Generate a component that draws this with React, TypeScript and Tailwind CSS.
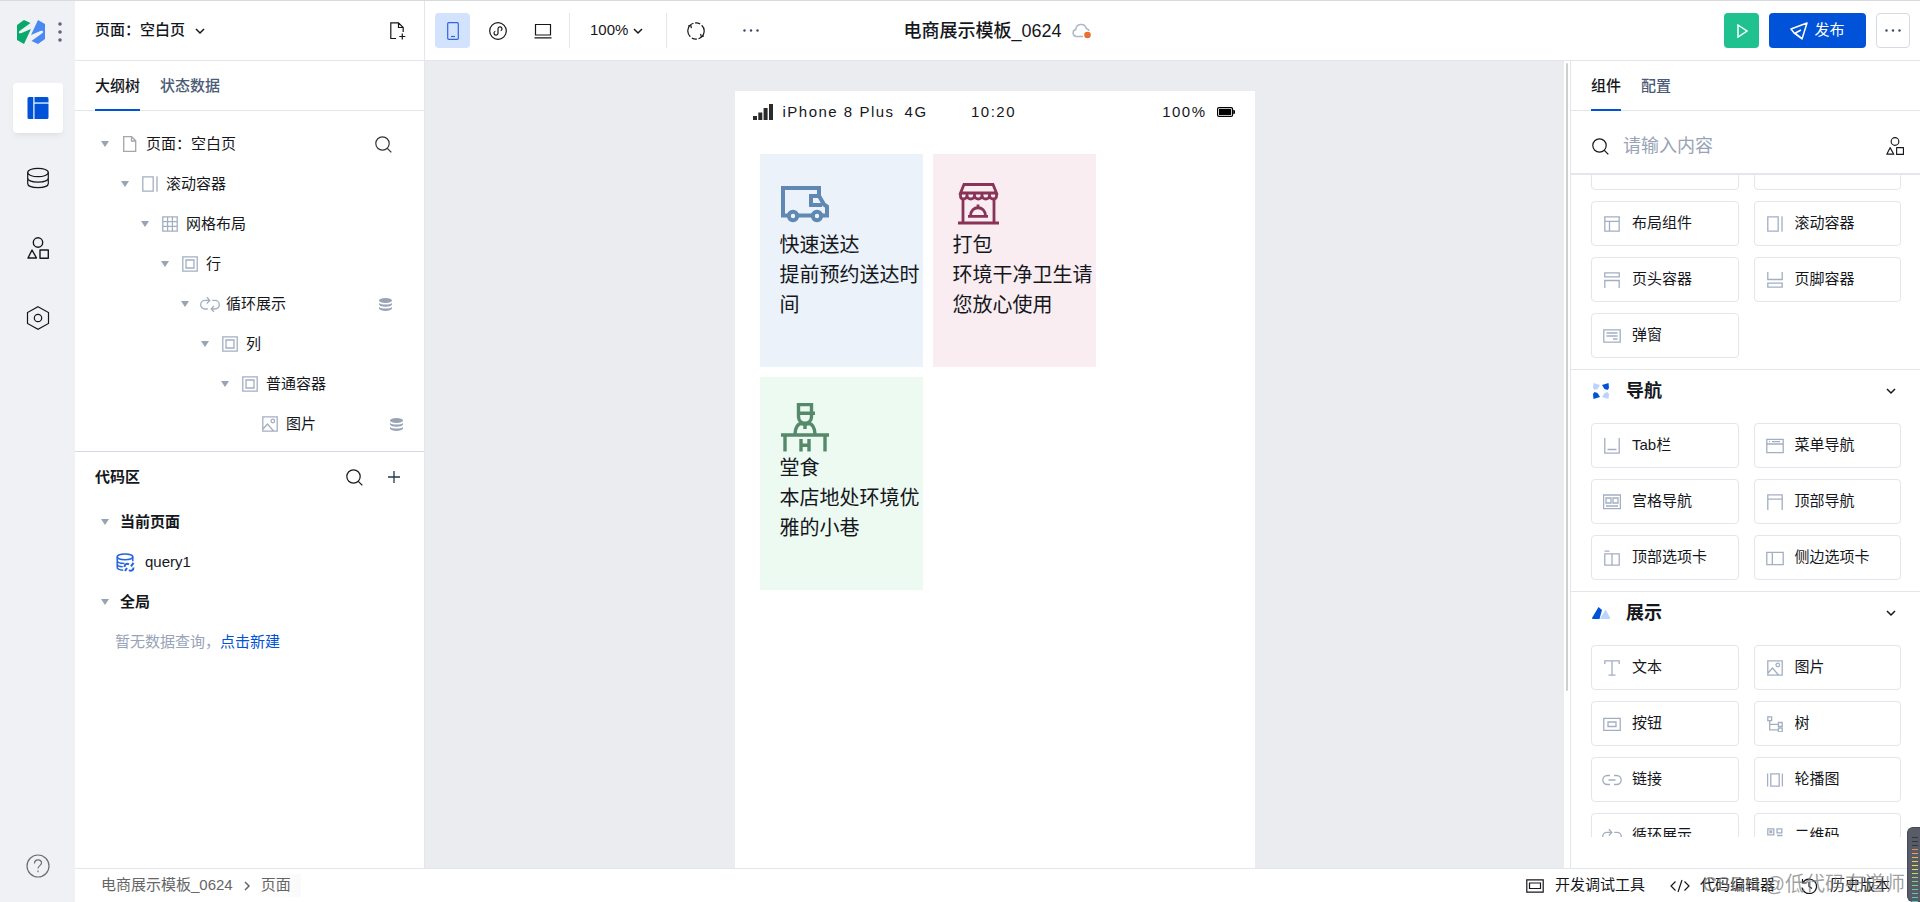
import type { ReactNode } from 'react'

type GlyphProps = { className?: string; box?: string; width?: number; children: ReactNode }

function Glyph({ className = 'size-4', box = '0 0 16 16', width = 1.2, children }: GlyphProps) {
  return (
    <svg
      className={`shrink-0 ${className}`}
      viewBox={box}
      fill="none"
      stroke="currentColor"
      strokeWidth={width}
      aria-hidden="true"
    >
      {children}
    </svg>
  )
}

const glyphs: Record<string, ReactNode> = {
  page: <path d="M1.7.7h8l4 4v10.600h-12zM9.500.7v4.300h4.200" />,
  scroll: <path d="M.8.8h10.400v14.400H.8zM15 .2v15.600" />,
  grid: <path d="M.8.8h14.400v14.400H.8zM5.600.8v14.400M10.400.8v14.400M.8 5.600h14.400M.8 10.400h14.400" />,
  box: <path d="M.8.8h14.400v14.400H.8zM4 4h8v8H4z" />,
  image: (
    <>
      <path d="M.8.8h14.400v14.400H.8zM1 13l4.500-5 6 7" />
      <circle cx="10.800" cy="5" r="1.800" />
    </>
  ),
  layout: <path d="M.8.8h14.400v14.400H.8zM.8 5.300h14.400M5.500 5.300v9.900" />,
  header: <path d="M.8.8h14.400v4H.8zM.8 16V8.500h14.400V16" />,
  footer: <path d="M.8 11.200h14.400v4H.8zM.8 0v7.500h14.400V0" />,
  tabbar: <path d="M.8 0v15.200h14.400V0M3.500 11.500h9" />,
  topnav: <path d="M.8 16V.8h14.400V16M.8 5.200h14.400" />,
  toptab: <path d="M.8 3.800h14.400v11.400H.8zM8 3.800v11.400M.5 1.200h5" />,
  text: <path d="M.8 4V.8h14.400V4M8 .8v14.400M4.500 15.200h7" />,
  tree: (
    <path d="M.8.8h3.800v3.800H.8zM11.400 6.500h3.800v3.800h-3.800zM11.400 12h3.800v3.800h-3.800zM2.700 4.600v9.300h8.700M2.700 8.400h8.700" />
  ),
  carousel: <path d="M3.800 1.800h8.400v12.400H3.800zM.6 1.500v13M15.400 1.500v13" />,
  qr: <path d="M.8.8h6v6h-6zM10 .8h4.800v4H10zM3 3h1.600v1.600H3zM10 7.500h5.500M.8 10h6v5.200h-6zM10 11h5v4" />,
}

const wideGlyphs: Record<string, ReactNode> = {
  dialog: <path d="M.8 1.800h16.400v12.400H.8zM3.500 5h11M3.500 8h11M10 11h4.500" />,
  menu: <path d="M.8 1.300h16.400v13.400H.8zM.8 6h16.400M3 3.700h1M6 3.700h8" />,
  gongge: <path d="M.6 1h16.800v13.600H.6zM3 4h5v5H3zM10 4h5v5h-5zM3 12h12" />,
  sidetab: <path d="M.8 2.300h16.400v12.400H.8zM6.300 2.300v12.400" />,
  button: <path d="M.8 2.300h16.400v12H.8zM5 6h8v4.500H5z" />,
}

const broadGlyphs: Record<string, ReactNode> = {
  link: (
    <path d="M8 3.500H5.300a4.500 4.500 0 0 0 0 9H8M12 3.500h2.700a4.500 4.500 0 0 1 0 9H12M6.500 8h7" />
  ),
  loop: (
    <path d="M7.800 13H5a4.300 4.300 0 0 1 0-8.600h4.600M6.800 1.300l3 3.100-3 3.100M12.200 4.400H15a4.300 4.300 0 0 1 0 8.600h-3.600M14 9.900L11.200 13l2.800 2.900" />
  ),
}

function KindIcon({ name }: { name: string }) {
  if (name in broadGlyphs) {
    return (
      <Glyph className="h-4 w-5" box="0 0 20 16" width={1.300}>
        {broadGlyphs[name]}
      </Glyph>
    )
  }
  if (name in wideGlyphs) {
    return (
      <Glyph className="h-4 w-[18px]" box="0 0 18 16" width={1.300}>
        {wideGlyphs[name]}
      </Glyph>
    )
  }
  return <Glyph width={1.300}>{glyphs[name]}</Glyph>
}

function Search({ className = 'size-[17px]' }: { className?: string }) {
  return (
    <Glyph className={className} box="0 0 17 17">
      <circle cx="7.500" cy="7.500" r="6.700" />
      <path d="M12.300 12.300l4 4" />
    </Glyph>
  )
}

function Chevron({ className = '' }: { className?: string }) {
  return (
    <Glyph className={`size-[10px] ${className}`} box="0 0 10 10" width={1.500}>
      <path d="M1 3l4 4 4-4" />
    </Glyph>
  )
}

function Shapes({ className }: { className: string }) {
  return (
    <Glyph className={className} box="0 0 22 22" width={1.400}>
      <circle cx="11" cy="5.500" r="4.700" />
      <path d="M5 13l-4 8h8.500zM13 13h8.300v8.300H13z" strokeLinejoin="round" />
    </Glyph>
  )
}

function Caret() {
  return (
    <svg className="h-[6px] w-2 shrink-0 text-[#98a3b7]" viewBox="0 0 8 6" fill="currentColor" aria-hidden="true">
      <path d="M0 0h8L4 6z" />
    </svg>
  )
}

function Dots({ className }: { className?: string }) {
  return (
    <svg className={`h-[3px] w-4 ${className ?? ''}`} viewBox="0 0 16 3" fill="#3d4a63" aria-hidden="true">
      <circle cx="1.500" cy="1.500" r="1.200" />
      <circle cx="8" cy="1.500" r="1.200" />
      <circle cx="14.500" cy="1.500" r="1.200" />
    </svg>
  )
}

function Bound() {
  return (
    <svg className="h-[13px] w-[13px] shrink-0 text-[#98a3b7]" viewBox="0 0 13 13" fill="currentColor" aria-hidden="true">
      <ellipse cx="6.500" cy="2.500" rx="6.500" ry="2.500" />
      <path d="M0 5c2 2 11 2 13 0v1.500c-1 3-12 3-13 0zM0 9c2 2 11 2 13 0v1.500c-1 3.200-12 3.200-13 0z" />
    </svg>
  )
}

function Logo() {
  return (
    <svg className="h-6 w-7" viewBox="0 0 28 24" aria-hidden="true">
      <path d="M0 5L7 0l6.500 3L2.500 11c-1.500 1.500-.3 2.700 1.500 2.200L14 9 7 24l-7-4z" fill="#07a86c" />
      <path d="M28 19l-7 5-6.500-3 11-8c1.500-1.500.3-2.700-1.500-2.200L14 15l7-15 7 4z" fill="#4a89f3" />
    </svg>
  )
}

const railButton = 'flex size-[50px] items-center justify-center rounded'

function Rail() {
  return (
    <nav aria-label="主导航" className="flex w-[75px] shrink-0 flex-col items-center bg-[#f0f1f5]">
      <div className="flex h-[61px] items-center gap-[13px] self-stretch pl-[17px]">
        <Logo />
        <svg className="h-5 w-1" viewBox="0 0 4 20" fill="#5b6780" aria-hidden="true">
          <circle cx="2" cy="2" r="1.800" />
          <circle cx="2" cy="10" r="1.800" />
          <circle cx="2" cy="18" r="1.800" />
        </svg>
      </div>
      <div className="mt-[21px] flex flex-col gap-5">
        <button aria-label="页面设计" className={`${railButton} bg-white shadow-md shadow-black/5`}>
          <svg className="size-[22px]" viewBox="0 0 22 22" fill="#0052d9" aria-hidden="true">
            <path d="M2 0h4.300v22H2a1.500 1.500 0 0 1-1.500-1.500v-19A1.500 1.500 0 0 1 2 0zM7.500 0H20a1.500 1.500 0 0 1 1.500 1.500V5.500h-14zM7.500 7h14v13.500A1.500 1.500 0 0 1 20 22H7.500z" />
            <path d="M7.500 5.500h14V7h-14z" fill="#a9c6fa" />
          </svg>
        </button>
        <button aria-label="数据源" className={railButton}>
          <Glyph className="size-[22px]" box="0 0 22 22">
            <ellipse cx="11" cy="5.500" rx="10.300" ry="4.200" />
            <path d="M.7 5.500v11c0 5.600 20.600 5.600 20.600 0v-11M.7 11c0 5.600 20.600 5.600 20.600 0" />
          </Glyph>
        </button>
        <button aria-label="组件库" className={railButton}>
          <Shapes className="size-[22px]" />
        </button>
        <button aria-label="设置" className={railButton}>
          <Glyph className="size-6" box="0 0 24 24">
            <path d="M12 .8l10.500 5.700v11L12 23.200 1.500 17.500v-11z" />
            <circle cx="12" cy="12" r="3.700" />
          </Glyph>
        </button>
      </div>
      <button aria-label="帮助" className="mt-auto mb-6 text-[#6b6e75]">
        <Glyph className="size-6" box="0 0 24 24">
          <circle cx="12" cy="12" r="11" />
          <path d="M8.500 9.500c0-5 7-4.500 7-.5 0 2.500-3.500 2.800-3.500 5.500M12 16.500v1.800" />
        </Glyph>
      </button>
    </nav>
  )
}

const toolButton = 'flex size-[35px] shrink-0 items-center justify-center rounded'

function TopBar() {
  return (
    <header className="flex h-[60px] shrink-0 border-b border-[#e3e6eb] bg-white">
      <div className="flex w-[350px] shrink-0 items-center border-r border-[#e3e6eb] pr-[18px] pl-5">
        <label className="relative flex items-center font-medium">
          <select aria-label="当前页面" className="w-[110px] appearance-none bg-transparent">
            <option>页面：空白页</option>
          </select>
          <Chevron className="pointer-events-none absolute right-0" />
        </label>
        <button aria-label="新建页面" className="ml-auto">
          <Glyph className="h-[18px] w-4" box="0 0 16 18">
            <path d="M6 16.500H.8V.8h7.700l4.700 4.700V10M8.500.8v4.700h4.700M12.300 11.500v6M9.300 14.500h6" />
          </Glyph>
        </button>
      </div>
      <div className="grid flex-1 grid-cols-[1fr_auto_1fr] items-center">
        <div className="flex items-center pl-[10px]">
          <div className="flex gap-[10px]">
            <button aria-label="手机预览" className={`${toolButton} bg-[#d3e3fd] text-[#2f66e0]`}>
              <Glyph className="h-[18px] w-3" box="0 0 12 18">
                <rect x=".7" y=".7" width="10.600" height="16.600" rx="1" />
                <path d="M4 14.500h4" />
              </Glyph>
            </button>
            <button aria-label="小程序预览" className={toolButton}>
              <Glyph className="size-[18px]" box="0 0 18 18">
                <circle cx="9" cy="9" r="8.300" />
                <path d="M6.300 9.300a2 2 0 1 0 2.700 2V6.700a2 2 0 1 1 2.700 2" />
              </Glyph>
            </button>
            <button aria-label="电脑预览" className={toolButton}>
              <Glyph className="h-4 w-[18px]" box="0 0 18 16">
                <path d="M1.500 1.500h15v10.500h-15zM.5 14.800h17" />
              </Glyph>
            </button>
          </div>
          <div className="ml-[9px] h-[35px] w-px bg-[#e3e6eb]" />
          <label className="relative ml-5 flex items-center">
            <select aria-label="缩放" className="w-[53px] appearance-none bg-transparent">
              <option>100%</option>
            </select>
            <Chevron className="pointer-events-none absolute right-0" />
          </label>
          <div className="ml-[23px] h-[35px] w-px bg-[#e3e6eb]" />
          <button aria-label="刷新" className={`${toolButton} ml-[11px]`}>
            <Glyph className="size-[18px]" box="0 0 18 18">
              <path d="M6.500 1.300a8 8 0 0 0-3.200 13.400M11.500 16.700A8 8 0 0 0 14.700 3.300M8 1a8 8 0 0 1 5.200 1.100M10 17a8 8 0 0 1-5.200-1.100M1.200 3.800l2.600-.4.600 2.700M16.800 14.200l-2.600.4-.6-2.700" />
            </Glyph>
          </button>
          <button aria-label="更多工具" className={`${toolButton} ml-5`}>
            <Dots />
          </button>
        </div>
        <div className="flex items-center gap-[10px]">
          <h1 className="text-lg font-medium">电商展示模板_0624</h1>
          <svg className="h-4 w-5" viewBox="0 0 20 16" fill="none" aria-hidden="true">
            <path
              d="M11 13.500H4.500a3.500 3.500 0 0 1-.7-6.900 5.300 5.300 0 0 1 10.400-1.200 4 4 0 0 1 3 2.600"
              stroke="#aeb7c7"
              strokeWidth="1.500"
            />
            <circle cx="15.500" cy="12" r="3.300" fill="#ed6f2f" />
          </svg>
        </div>
      </div>
      <div className="flex w-[350px] shrink-0 items-center justify-end gap-[10px] pr-[10px]">
        <button aria-label="预览" className="flex size-[35px] items-center justify-center rounded bg-[#1fc18e] text-white">
          <Glyph className="size-[14px]" box="0 0 14 14" width={1.500}>
            <path d="M3 1l9 6-9 6z" />
          </Glyph>
        </button>
        <button className="flex h-[35px] w-[97px] items-center justify-center gap-[6px] rounded bg-[#0052d9] text-white">
          <Glyph className="size-[18px]" box="0 0 18 18" width={1.500}>
            <path d="M17 1L1 7l3.500 4.500L12 17zM4.500 11.500L11 8M5 11l7 5.500" strokeLinejoin="round" />
          </Glyph>
          发布
        </button>
        <button aria-label="更多" className="flex h-[35px] w-[34px] items-center justify-center rounded border border-[#d5d9e4]">
          <Dots />
        </button>
      </div>
    </header>
  )
}

function Tabs({ items }: { items: string[] }) {
  return (
    <div role="tablist" className="flex h-[50px] shrink-0 gap-5 border-b border-[#e3e6eb] px-5 font-medium">
      {items.map((item, i) => (
        <button
          key={item}
          role="tab"
          aria-selected={i === 0}
          className={
            i === 0
              ? '-mb-px border-b-2 border-[#0052d9] pt-0.5'
              : '-mb-px border-b-2 border-transparent pt-0.5 text-[#4b5b76]'
          }
        >
          {item}
        </button>
      ))}
    </div>
  )
}

const tree = [
  { label: '页面：空白页', icon: 'page', indent: 'pl-[26px] pr-8', tail: 'search' },
  { label: '滚动容器', icon: 'scroll', indent: 'pl-[46px]' },
  { label: '网格布局', icon: 'grid', indent: 'pl-[66px]' },
  { label: '行', icon: 'box', indent: 'pl-[86px]' },
  { label: '循环展示', icon: 'loop', indent: 'pl-[106px] pr-8', tail: 'bound' },
  { label: '列', icon: 'box', indent: 'pl-[126px]' },
  { label: '普通容器', icon: 'box', indent: 'pl-[146px]' },
  { label: '图片', icon: 'image', indent: 'pl-[185px] pr-[21px]', tail: 'bound', leaf: true },
]

function Outline() {
  return (
    <aside className="flex w-[350px] shrink-0 flex-col border-r border-[#e3e6eb] bg-white">
      <Tabs items={['大纲树', '状态数据']} />
      <ul className="border-b border-[#d3d8e2] pt-[13px] pb-[7px]">
        {tree.map((node, i) => (
          <li key={i} className={`flex h-10 items-center ${node.indent}`}>
            {!node.leaf && <Caret />}
            <span
              className={`flex w-5 justify-center ${node.leaf ? '' : 'ml-[11px]'} ${
                node.icon === 'page' ? 'text-[#a3a6ad]' : 'text-[#a3aec1]'
              }`}
            >
              <KindIcon name={node.icon} />
            </span>
            <span className="ml-[6px]">{node.label}</span>
            {node.tail === 'search' && (
              <button aria-label="搜索节点" className="ml-auto text-[#333]">
                <Search />
              </button>
            )}
            {node.tail === 'bound' && (
              <span className="ml-auto">
                <Bound />
              </span>
            )}
          </li>
        ))}
      </ul>
      <section>
        <div className="flex h-[50px] items-center pr-6 pl-5">
          <h2 className="font-bold">代码区</h2>
          <button aria-label="搜索代码" className="ml-auto">
            <Search />
          </button>
          <button aria-label="新建查询" className="ml-[25px] text-[#1c3a52]">
            <Glyph className="size-3" box="0 0 12 12" width={1.300}>
              <path d="M6 0v12M0 6h12" />
            </Glyph>
          </button>
        </div>
        <div className="flex h-10 items-center gap-[11px] pl-[26px] font-bold">
          <Caret />
          当前页面
        </div>
        <div className="flex h-10 items-center gap-[10px] pl-[41px]">
          <svg className="size-[19px]" viewBox="0 0 19 19" fill="none" stroke="#2563e0" strokeWidth="1.500" aria-hidden="true">
            <ellipse cx="9" cy="3.800" rx="7.800" ry="2.900" />
            <path d="M1.200 3.800v10.400c0 1.800 2.500 2.800 6 3M1.200 7.500c0 2 3 3 7.300 3M1.200 11c0 1.800 2.500 2.600 5.500 2.800M16.800 3.800v4.500" />
            <path d="M8.500 14c0-3 2.500-4 4.500-2.500M9 18l2-3M17.500 14.500c0 3-2.500 4-4.500 2.500M17.500 9.800l-2.500 3.500" strokeWidth="2" />
          </svg>
          query1
        </div>
        <div className="flex h-10 items-center gap-[11px] pl-[26px] font-bold">
          <Caret />
          全局
        </div>
        <p className="flex h-10 items-center pl-10 text-[#98a3b7]">
          暂无数据查询，
          <a href="#new-query" className="text-[#0052d9]">
            点击新建
          </a>
        </p>
      </section>
    </aside>
  )
}

function Truck() {
  return (
    <svg className="size-[50px]" viewBox="0 0 50 50" fill="none" stroke="#5f88b3" strokeWidth="4" aria-hidden="true">
      <path d="M7.500 36.500H3V9h36v8M18 36.500h14M39 17h-8v9h11M38.500 16l5.500 9.500 3 2v9h-5" />
      <circle cx="13" cy="37" r="4.200" />
      <circle cx="37" cy="37" r="4.200" />
    </svg>
  )
}

function Shop() {
  return (
    <svg className="size-[50px]" viewBox="0 0 50 50" fill="none" stroke="#8a3358" strokeWidth="2.800" aria-hidden="true">
      <path d="M11 5.500h29l3.500 8.500H7.500z" />
      <path d="M7.500 14v3c0 4 5.500 4 6.500 0 1 4 6.500 4 7.500 0 1 4 6.500 4 7.500 0 1 4 6.500 4 7.500 0 1 4 7 4 7 0v-3" />
      <path d="M14 14v3M21.500 14v3M29 14v3M36.500 14v3M10 20v24M41 20v24M5 44h41M15 37.300h20M17.500 37c0-11 15-11 15 0M25 28.500V25.500" />
    </svg>
  )
}

function Chef() {
  return (
    <svg className="size-[50px]" viewBox="0 0 50 50" fill="none" stroke="#54896a" strokeWidth="3.400" aria-hidden="true">
      <path d="M18.500 11V2.600h13V11M17 11.300h18M18.500 11v3.500c0 9 13 9 13 0V11M15 32c0-6 3-10.500 7-11M35 32c0-6-3-10.500-7-11M20 20.500c3 2 7 2 10 0M25 21v6M1 33h48M5 34v15.500M45 34v15.500M21 37v12.500M29 37v12.500M21 43.300h8" />
    </svg>
  )
}

const cards = [
  { title: '快速送达', text: '提前预约送达时间', bg: 'bg-[#ecf2fa]', art: <Truck /> },
  { title: '打包', text: '环境干净卫生请您放心使用', bg: 'bg-[#f9edf1]', art: <Shop /> },
  { title: '堂食', text: '本店地处环境优雅的小巷', bg: 'bg-[#ecfaf2]', art: <Chef /> },
]

function Canvas() {
  return (
    <main className="flex flex-1 justify-center overflow-hidden bg-[#ebecf0] pt-[30px]">
      <div className="w-[520px] bg-white">
        <div className="grid h-[42px] grid-cols-3 items-center pr-5 pl-[18px] tracking-widest whitespace-nowrap">
          <div className="flex items-center gap-[10px]">
            <svg className="h-4 w-5 shrink-0" viewBox="0 0 20 16" fill="#2b2b2b" aria-hidden="true">
              <path d="M0 12h4v4H0zM5.300 8.500h4V16h-4zM10.600 4h4v12h-4zM16 0h4v16h-4z" />
            </svg>
            <span>iPhone 8 Plus</span>
            <span>4G</span>
          </div>
          <div className="text-center">10:20</div>
          <div className="flex items-center justify-end gap-[10px]">
            <span>100%</span>
            <svg className="h-[10px] w-[18px] shrink-0" viewBox="0 0 18 10" aria-hidden="true">
              <rect x=".6" y=".6" width="15" height="8.800" rx="1.500" fill="none" stroke="#000" strokeWidth="1.200" />
              <path d="M2 2h12.200v6H2zM16.300 3h.7a1 1 0 0 1 1 1v2a1 1 0 0 1-1 1h-.7z" />
            </svg>
          </div>
        </div>
        <div className="grid grid-cols-[163px_163px] gap-[10px] pt-[21px] pl-[25px] text-xl/[30px]">
          {cards.map((card) => (
            <article key={card.title} className={`pt-[25px] pb-[47px] pl-5 ${card.bg}`}>
              {card.art}
              <div className="pt-px">
                <h3>{card.title}</h3>
                <p>{card.text}</p>
              </div>
            </article>
          ))}
        </div>
      </div>
    </main>
  )
}

function Tile({ icon, label }: { icon: string; label: string }) {
  return (
    <button className="flex h-[45px] items-center rounded border border-[#e3e6eb] pl-[10px] whitespace-nowrap">
      <span className="flex w-5 justify-center text-[#a3aec1]">
        <KindIcon name={icon} />
      </span>
      <span className="ml-[10px]">{label}</span>
    </button>
  )
}

const tileGrid = 'grid grid-cols-2 gap-x-[15px] gap-y-[11px] pr-[19px] pb-[11px] pl-5'

const layoutTiles = [
  ['layout', '布局组件'],
  ['scroll', '滚动容器'],
  ['header', '页头容器'],
  ['footer', '页脚容器'],
  ['dialog', '弹窗'],
]

const groups = [
  {
    title: '导航',
    mark: (
      <svg className="size-4" viewBox="0 0 16 16" aria-hidden="true">
        <path d="M.5 0L7 2 4.500 6 1.500 7 0 5zM15.500 16L9 14l2.500-4 3-1 1.500 2z" fill="#bcd3fb" />
        <path d="M15.500 0L9 2l2.500 4 3 1L16 5zM.5 16L7 14l-2.500-4-3-1L0 11z" fill="#0052d9" />
      </svg>
    ),
    tiles: [
      ['tabbar', 'Tab栏'],
      ['menu', '菜单导航'],
      ['gongge', '宫格导航'],
      ['topnav', '顶部导航'],
      ['toptab', '顶部选项卡'],
      ['sidetab', '侧边选项卡'],
    ],
  },
  {
    title: '展示',
    mark: (
      <svg className="h-3 w-[18px]" viewBox="0 0 18 12" aria-hidden="true">
        <path d="M13.500 2.500L18 10.500a1 1 0 0 1-.8 1.500H8z" fill="#bcd3fb" />
        <path d="M6.500 0L10 3 7.500 12H.5L0 11z" fill="#0052d9" />
      </svg>
    ),
    tiles: [
      ['text', '文本'],
      ['image', '图片'],
      ['button', '按钮'],
      ['tree', '树'],
      ['link', '链接'],
      ['carousel', '轮播图'],
      ['loop', '循环展示'],
      ['qr', '二维码'],
    ],
  },
]

function Library() {
  return (
    <aside className="flex w-[350px] shrink-0 flex-col border-l border-[#e3e6eb] bg-white">
      <Tabs items={['组件', '配置']} />
      <div className="flex h-[64px] shrink-0 items-center border-b-2 border-[#e3e6eb] pt-3 pr-4 pb-1 pl-[21px]">
        <Search />
        <input
          aria-label="搜索组件"
          placeholder="请输入内容"
          className="ml-[14px] min-w-0 flex-1 text-lg placeholder:text-[#98a3b7] focus:outline-none"
        />
        <button aria-label="组件分类">
          <Shapes className="size-[18px]" />
        </button>
      </div>
      <div className="mb-[31px] min-h-0 flex-1 overflow-hidden">
        <div className={`-mt-[30px] border-b border-[#e3e6eb] ${tileGrid}`}>
          <div className="h-[45px] rounded border border-[#e3e6eb]" />
          <div className="h-[45px] rounded border border-[#e3e6eb]" />
          {layoutTiles.map(([icon, label]) => (
            <Tile key={label} icon={icon} label={label} />
          ))}
        </div>
        {groups.map((group) => (
          <section key={group.title} className="border-b border-[#e3e6eb]">
            <h2 className="mb-[11px] flex h-[42px] items-center pr-6 pl-5 text-lg font-bold">
              <span className="flex w-5 justify-center">{group.mark}</span>
              <span className="ml-[15px]">{group.title}</span>
              <Chevron className="ml-auto" />
            </h2>
            <div className={tileGrid}>
              {group.tiles.map(([icon, label]) => (
                <Tile key={label} icon={icon} label={label} />
              ))}
            </div>
          </section>
        ))}
      </div>
    </aside>
  )
}

function Footer() {
  return (
    <footer className="flex h-[34px] shrink-0 items-center border-t border-[#e3e6eb] bg-white pr-[30px] pl-[26px] whitespace-nowrap">
      <nav aria-label="面包屑" className="flex items-center text-[#666]">
        <a href="#template">电商展示模板_0624</a>
        <Chevron className="mx-[9px] -rotate-90" />
        <a href="#page" className="bg-gradient-to-r from-white to-[#fafafa] pr-[10px]">
          页面
        </a>
      </nav>
      <div className="ml-auto flex items-center">
        <button className="flex items-center gap-[11px]">
          <Glyph className="h-[14px] w-[18px]" box="0 0 18 14" width={1.200}>
            <path d="M.8.8h16.400v12.400H.8zM3.500 4h11v5.500h-11z" />
          </Glyph>
          开发调试工具
        </button>
        <button className="ml-[25px] flex items-center gap-[10px]">
          <Glyph className="h-[14px] w-5" box="0 0 20 14">
            <path d="M5.500 2.500L1 7l4.500 4.500M14.500 2.500L19 7l-4.500 4.500M12 1L8 13" />
          </Glyph>
          代码编辑器
        </button>
        <button className="ml-[26px] flex items-center gap-[13px]">
          <Glyph className="size-4">
            <path d="M2 4.500A7.300 7.300 0 1 1 1 9.500M1.500 1v4h4M8 4v4.500l3 2" />
          </Glyph>
          历史版本
        </button>
      </div>
    </footer>
  )
}

const meter = [
  '#33363f', '#33363f', '#33363f', '#ef8a5a', '#efa052', '#efb84e', '#f0cf4c', '#ecdc4e', '#d6df55',
  '#b9dc5e', '#9cd768', '#82d273', '#70cf80', '#62cd90', '#5acca2', '#55cdb4', '#54d0c0',
]

export default function App() {
  return (
    <div className="relative flex h-screen flex-col overflow-hidden border-t border-[#d9dadd] bg-white font-['Liberation_Sans','Noto_Sans_CJK_SC',sans-serif] text-[15px] text-[#15171c]">
      <div className="flex min-h-0 flex-1">
        <Rail />
        <div className="flex min-w-0 flex-1 flex-col">
          <TopBar />
          <div className="flex min-h-0 flex-1">
            <Outline />
            <Canvas />
            <div className="flex w-[6px] shrink-0 flex-col items-center bg-white pt-0.5">
              <div className="h-[78%] w-0.5 rounded bg-[#cfcfcf]" />
            </div>
            <Library />
          </div>
          <Footer />
        </div>
      </div>
      <div className="pointer-events-none absolute right-[15px] bottom-1 text-xl leading-7 text-[#777]/70">
        CSDN @低代码布道师
      </div>
      <div className="absolute right-0 bottom-0 flex h-[75px] w-[13px] flex-col items-end gap-[3px] rounded-l-md border border-r-0 border-[#454955] bg-[#585c69] pt-[9px] pr-[2px]">
        {meter.map((color, i) => (
          <span key={i} className="h-px w-[6px] shrink-0" style={{ backgroundColor: color }} />
        ))}
      </div>
    </div>
  )
}
